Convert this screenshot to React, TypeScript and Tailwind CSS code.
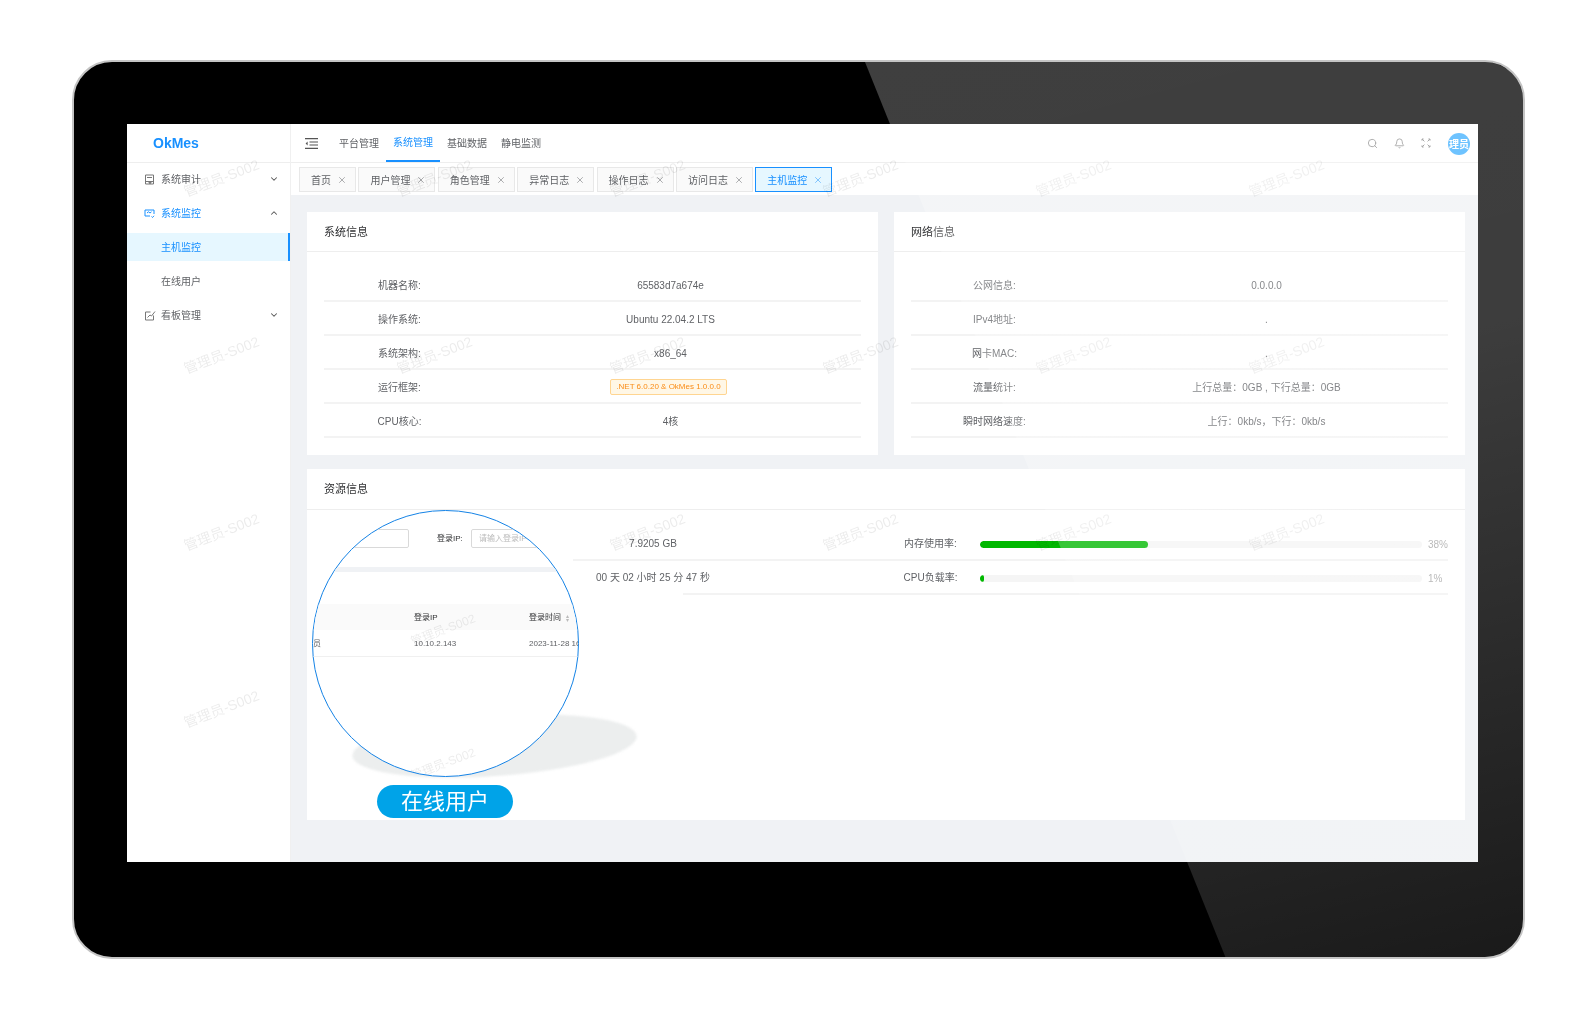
import { Bell, ChevronDown, ChevronUp, Search, X } from "lucide-react";

const FONT = "font-['Liberation_Sans','Noto_Sans_CJK_SC',sans-serif]";

const TOP_MENUS = ["平台管理", "系统管理", "基础数据", "静电监测"];
const TABS = ["首页", "用户管理", "角色管理", "异常日志", "操作日志", "访问日志", "主机监控"];

const SYSTEM_ROWS = [
  { label: "机器名称:", value: "65583d7a674e" },
  { label: "操作系统:", value: "Ubuntu 22.04.2 LTS" },
  { label: "系统架构:", value: "x86_64" },
  { label: "运行框架:", value: "tag" },
  { label: "CPU核心:", value: "4核" },
];

const NETWORK_ROWS = [
  { label: "公网信息:", value: "0.0.0.0" },
  { label: "IPv4地址:", value: "." },
  { label: "网卡MAC:", value: "." },
  { label: "流量统计:", value: "上行总量\uFF1A0GB , 下行总量\uFF1A0GB" },
  { label: "瞬时网络速度:", value: "上行\uFF1A0kb/s\uFF0C下行\uFF1A0kb/s" },
];

// which watermarks show through, one entry per row of the grid
const WATERMARKS = [
  [1, 1, 1, 1, 1, 1],
  [1, 1, 1, 1, 1, 1],
  [1, 0, 1, 1, 1, 1],
  [1, 0, 0, 0, 0, 0],
];

function AuditIcon() {
  return (
    <svg width="11" height="11" viewBox="0 0 11 11" fill="none" stroke="#777" strokeWidth="1">
      <path d="M1.5 10V1h8v9z" />
      <path d="M3 3.5h5M1.5 7.5h8" />
      <circle cx="6" cy="8.5" r="1" fill="#777" />
    </svg>
  );
}

function MonitorIcon() {
  return (
    <svg width="11" height="11" viewBox="0 0 11 11" fill="none" stroke="#1890ff" strokeWidth="1">
      <path d="M6 8H1V2h9v4" />
      <path d="M3 5l1.5-1.2L6 5l1.5-1.2" />
      <path d="M7.5 8.5l1 1 1.5-1.7" />
    </svg>
  );
}

function BoardIcon() {
  return (
    <svg width="12" height="11" viewBox="0 0 12 11" fill="none" stroke="#777" strokeWidth="1">
      <path d="M9.5 5.5V10h-8V2h5" />
      <path d="M3.5 7.5L6 5l1.5 1L11 1.5" />
    </svg>
  );
}

function CollapseIcon() {
  return (
    <svg width="13" height="11" viewBox="0 0 13 11" fill="none" stroke="#555" strokeWidth="1.2">
      <path d="M0 .6h13M4.5 4h8.5M4.5 7h8.5M0 10.4h13" />
      <path d="M2.6 3.6L.6 5.5l2 1.9z" fill="#555" stroke="none" />
    </svg>
  );
}

function ExpandIcon() {
  return (
    <svg width="10" height="10" viewBox="0 0 10 10" fill="none" stroke="#8c8c8c" strokeWidth="1">
      <path d="M1 1l2.4 2.4M9 1L6.6 3.4M1 9l2.4-2.4M9 9L6.6 6.6" />
      <path d="M1 2.6V1h1.6M9 2.6V1H7.4M1 7.4V9h1.6M9 7.4V9H7.4" />
    </svg>
  );
}

function Sidebar() {
  return (
    <aside className="w-[164px] shrink-0 bg-white border-r border-[#f0f0f0] flex flex-col">
      <div className="h-[39px] shrink-0 border-b border-[#eeeeee] flex items-center pl-[26px] pt-[1px] font-bold text-[14px] text-[#1890ff]">
        OkMes
      </div>
      <div className="-mt-[1px] text-[10px] text-[#606266]">
        <div className="h-[34px] flex items-center pl-[17px] pr-[11px]">
          <AuditIcon />
          <span className="ml-[6px] flex-1">系统审计</span>
          <ChevronDown size={10} strokeWidth={2.5} className="text-[#555]" />
        </div>
        <div className="h-[34px] flex items-center pl-[17px] pr-[11px] text-[#1890ff]">
          <MonitorIcon />
          <span className="ml-[6px] flex-1">系统监控</span>
          <ChevronUp size={10} strokeWidth={2.5} className="text-[#555]" />
        </div>
        <div className="mt-[3px] mb-[3px] h-[28px] flex items-center pl-[34px] bg-[#e6f7ff] border-r-2 border-[#1890ff] text-[#1890ff]">
          主机监控
        </div>
        <div className="h-[34px] flex items-center pl-[34px]">在线用户</div>
        <div className="h-[34px] flex items-center pl-[17px] pr-[11px]">
          <BoardIcon />
          <span className="ml-[5px] flex-1">看板管理</span>
          <ChevronDown size={10} strokeWidth={2.5} className="text-[#555]" />
        </div>
      </div>
    </aside>
  );
}

function TopBar() {
  return (
    <header className="h-[39px] shrink-0 bg-white border-b border-[#eeeeee] flex items-center pl-[14px] pr-[8px]">
      <CollapseIcon />
      <nav className="ml-[14px] flex h-full">
        {TOP_MENUS.map((menu) => (
          <div
            key={menu}
            className={
              menu === "系统管理"
                ? "w-[54px] flex items-center justify-center text-[10px] text-[#1890ff] border-b-2 border-[#1890ff]"
                : "w-[54px] flex items-center justify-center text-[10px] text-[#606266]"
            }
          >
            {menu}
          </div>
        ))}
      </nav>
      <div className="ml-auto flex items-center">
        <Search size={11} className="text-[#8c8c8c]" />
        <Bell size={11} className="ml-[16px] text-[#8c8c8c]" />
        <div className="ml-[16px]">
          <ExpandIcon />
        </div>
        <div className="ml-[17px] mt-[2px] w-[22px] h-[22px] rounded-full bg-[#40b0ff] overflow-hidden flex items-center justify-center text-white text-[10px] font-bold">
          理员
        </div>
      </div>
    </header>
  );
}

function TabBar() {
  return (
    <div className="h-[32px] shrink-0 bg-white flex items-start gap-[2.4px] pl-[8px] pt-[4px]">
      {TABS.map((tab) => (
        <div
          key={tab}
          className={
            tab === "主机监控"
              ? "h-[25px] pl-[11px] pr-[8px] pt-[1px] flex items-center gap-[6px] border border-[#1890ff] bg-[#e6f7ff] text-[10px] text-[#1890ff]"
              : "h-[25px] pl-[11px] pr-[8px] pt-[1px] flex items-center gap-[6px] border border-[#e8e8e8] bg-[#fafafa] text-[10px] text-[#606266]"
          }
        >
          {tab}
          <X size={10} strokeWidth={1.2} />
        </div>
      ))}
    </div>
  );
}

function InfoCard({
  title,
  rows,
  rowClass,
}: {
  title: string;
  rows: { label: string; value: string }[];
  rowClass: string;
}) {
  return (
    <section className="bg-white h-[243px]">
      <div className="h-[40px] border-b border-[#eeeeee] flex items-center px-[17px] pt-[1px] text-[11px] text-[#303133]">
        {title}
      </div>
      <div className="px-[17px] pt-[16px]">
        {rows.map((row) => (
          <div
            key={row.label}
            className={`h-[34px] pt-[2px] border-b-2 border-[#f3f3f3] grid items-center text-center text-[10px] text-[#606266] ${rowClass}`}
          >
            <span>{row.label}</span>
            {row.value === "tag" ? (
              <span className="justify-self-center -translate-x-[2px] h-[16px] px-[5px] flex items-center border border-[#ffd591] bg-[#fff7e6] rounded-[2px] text-[#fa8c16] text-[8px]">
                .NET 6.0.20 &amp; OkMes 1.0.0.0
              </span>
            ) : (
              <span>{row.value}</span>
            )}
          </div>
        ))}
      </div>
    </section>
  );
}

function ResourceCard() {
  return (
    <section className="mt-[14px] bg-white h-[351px]">
      <div className="h-[41px] border-b border-[#eeeeee] flex items-center px-[17px] pt-[1px] text-[11px] text-[#303133]">
        资源信息
      </div>
      <div className="pl-[266px] pr-[17px] pt-[16px] text-[10px] text-[#606266]">
        <div className="h-[33px] pt-[1px] flex items-center">
          <span className="w-[160px] text-center">7.9205 GB</span>
          <span className="ml-[171px] w-[53px] text-center whitespace-nowrap">内存使用率:</span>
          <div className="ml-[23px] mt-[2px] w-[442px] h-[7px] rounded-full bg-[#f5f5f5] overflow-hidden">
            <div className="w-[38%] h-full rounded-full bg-[#00b800]" />
          </div>
          <span className="ml-[6px] mt-[2px] text-[#aaaaaa]">38%</span>
        </div>
        <div className="h-[2px] bg-[#f3f3f3]" />
        <div className="h-[32px] flex items-center">
          <span className="w-[160px] text-center">00 天 02 小时 25 分 47 秒</span>
          <span className="ml-[171px] w-[53px] flex justify-center whitespace-nowrap">CPU负载率:</span>
          <div className="ml-[23px] mt-[3px] w-[442px] h-[7px] rounded-full bg-[#f5f5f5] overflow-hidden">
            <div className="w-[4px] h-full rounded-full bg-[#00b800]" />
          </div>
          <span className="ml-[6px] mt-[3px] text-[#aaaaaa]">1%</span>
        </div>
        <div className="h-[2px] ml-[110px] bg-[#f3f3f3]" />
      </div>
    </section>
  );
}

function Watermarks() {
  return (
    <div className="absolute left-[-12px] top-[-34px] grid grid-cols-[repeat(6,213px)] auto-rows-[177px] pointer-events-none">
      {WATERMARKS.flat().map((on, i) => (
        <div key={i} className="flex items-center justify-center">
          {on ? (
            <span className="-rotate-[21deg] whitespace-nowrap text-[14px] text-black/[0.08]">管理员-S002</span>
          ) : null}
        </div>
      ))}
    </div>
  );
}

// the magnified crop of the online users page, sits over the resource card
function OnlineUsersCallout() {
  return (
    <div className="absolute left-[185px] top-[386px] w-[325px] h-[308px]">
      <div className="absolute left-[40px] top-[206px] w-[285px] h-[60px] rounded-[50%] bg-[#eceeee] blur-[1px] -rotate-[4deg]" />
      <div className="absolute left-0 top-0 w-[267px] h-[267px] rounded-full border-[1.5px] border-[#1583e6] bg-white overflow-hidden text-[8px] text-[#606266]">
        <div className="absolute left-[-20px] top-[18px] w-[116px] h-[19px] border border-[#d9d9d9] rounded-[2px]" />
        <span className="absolute left-[124px] top-[22px] text-[#303133]">登录IP:</span>
        <div className="absolute left-[158px] top-[18px] w-[120px] h-[19px] border border-[#d9d9d9] rounded-[2px] pl-[7px] pt-[1px] flex items-center text-[#bbbbbb]">
          请输入登录IP
        </div>
        <div className="absolute left-0 top-[56px] w-full h-[5px] bg-[#f0f2f5]" />
        <div className="absolute left-0 top-[93px] w-full h-[26px] bg-[#fafafa]" />
        <span className="absolute left-[101px] top-[101px] text-[#303133]">登录IP</span>
        <span className="absolute left-[216px] top-[101px] text-[#303133]">登录时间</span>
        <span className="absolute left-[253px] top-[103px] text-[6px] leading-[4px] text-[#bbbbbb]">▴<br />▾</span>
        <div className="absolute left-0 top-[145px] w-full h-px bg-[#f0f0f0]" />
        <span className="absolute left-0 top-[127px]">员</span>
        <span className="absolute left-[101px] top-[127px]">10.10.2.143</span>
        <span className="absolute left-[216px] top-[127px] whitespace-nowrap">2023-11-28 16</span>
        <span className="absolute left-[96px] top-[110px] -rotate-[21deg] whitespace-nowrap text-[12px] text-black/[0.08]">管理员-S002</span>
        <span className="absolute left-[96px] top-[244px] -rotate-[21deg] whitespace-nowrap text-[12px] text-black/[0.08]">管理员-S002</span>
      </div>
      <div className="absolute left-[65px] top-[275px] w-[136px] h-[33px] rounded-full bg-[#00a3e8] flex items-center justify-center pb-[1px] text-white text-[22px]">
        在线用户
      </div>
    </div>
  );
}

export default function App() {
  return (
    <div className={`${FONT} w-[1596px] h-[1020px] bg-white pl-[72px] pt-[60px] overflow-hidden`}>
      <div className="relative w-[1453px] h-[899px] rounded-[40px] border-2 border-[#c4c4c4] bg-black overflow-hidden pl-[53px] pt-[62px]">
        <div className="relative w-[1351px] h-[738px] flex bg-[#f0f2f5] overflow-hidden blur-[0.35px]">
          <Sidebar />
          <main className="flex-1 flex flex-col min-w-0">
            <TopBar />
            <TabBar />
            <div className="flex-1 pl-[16px] pr-[13px] pt-[17px]">
              <div className="grid grid-cols-2 gap-[16px]">
                <InfoCard title="系统信息" rows={SYSTEM_ROWS} rowClass="grid-cols-[151px_1fr] [&>*:last-child]:ml-[5px]" />
                <InfoCard title="网络信息" rows={NETWORK_ROWS} rowClass="grid-cols-[167px_1fr] [&>*:last-child]:ml-[7px]" />
              </div>
              <ResourceCard />
            </div>
          </main>
          <Watermarks />
          <OnlineUsersCallout />
        </div>
        {/* glass reflection across the bezel and the screen */}
        <div className="absolute inset-0 pointer-events-none bg-[linear-gradient(165deg,rgba(255,255,255,0.25)_0%,rgba(255,255,255,0.24)_50%,rgba(255,255,255,0.1)_100%)] [clip-path:polygon(791px_0,1453px_0,1453px_899px,1153px_899px)]" />
      </div>
    </div>
  );
}
